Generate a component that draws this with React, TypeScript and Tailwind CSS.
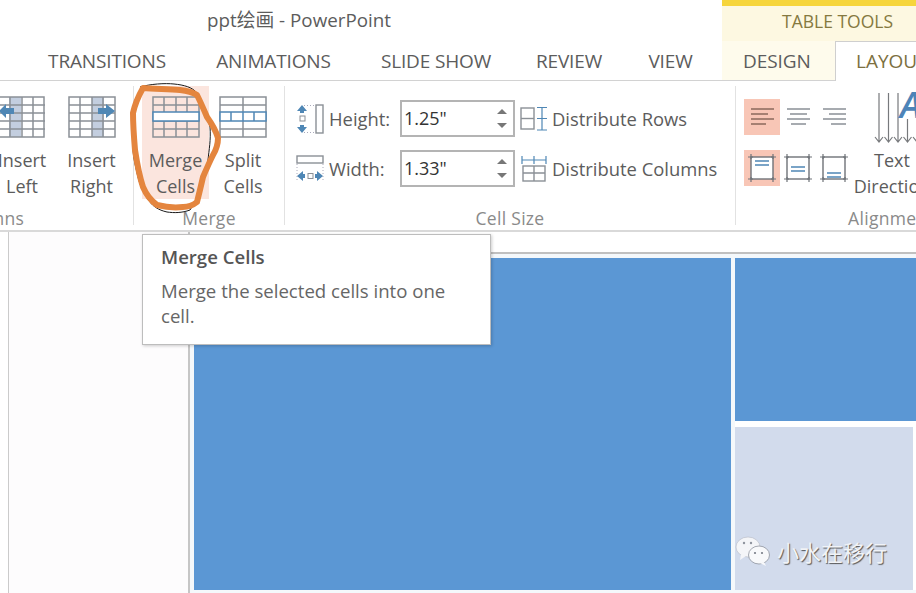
const tabs = [
  { label: 'TRANSITIONS', w: 'w-[166px]' },
  { label: 'ANIMATIONS', w: 'w-[167px]' },
  { label: 'SLIDE SHOW', w: 'w-[158px]' },
  { label: 'REVIEW', w: 'w-[108px]' },
  { label: 'VIEW', w: 'w-[95px]' },
];

const GRAY = '#8b9096';
const BLUE = '#4f87b5';

function InsertIcon({ side }: { side: 'left' | 'right' }) {
  const arrow = side === 'left' ? 'M16 12 L8 12 L8 8 L1 15 L8 22 L8 18 L16 18 Z' : 'M30 12 L38 12 L38 8 L47 15 L38 22 L38 18 L30 18 Z';
  const colX = side === 'left' ? 11 : 24;
  return (
    <svg width="48" height="44" viewBox="0 0 48 44">
      <rect x={colX} y="1" width="12" height="40" fill="#c3cedf" />
      <g stroke={GRAY} strokeWidth="1.5" fill="none">
        <rect x={side === 'left' ? -10 : 1} y="1" width={side === 'left' ? 56 : 46} height="40" />
        <path d="M1 9H47M1 17H47M1 25H47M1 33H47M12 1V41M24 1V41M35 1V41" />
      </g>
      <path d={arrow} fill={BLUE} />
    </svg>
  );
}

function MergeIcon() {
  return (
    <svg width="48" height="44" viewBox="0 0 48 44">
      <g stroke={GRAY} strokeWidth="1.5" fill="none">
        <rect x="1" y="1" width="46" height="40" />
        <path d="M1 9H47M1 25H47M1 33H47M12 1V16M24 1V16M35 1V16M12 25V41M24 25V41M35 25V41" />
      </g>
      <rect x="1" y="16" width="46" height="9" fill="#fff" stroke={BLUE} strokeWidth="1.5" />
    </svg>
  );
}

function SplitIcon() {
  return (
    <svg width="48" height="44" viewBox="0 0 48 44">
      <g stroke={GRAY} strokeWidth="1.5" fill="none">
        <rect x="1" y="1" width="46" height="40" />
        <path d="M1 9H47M1 33H47M24 1V16M24 25V41" />
      </g>
      <rect x="1" y="16" width="46" height="9" fill="#fff" stroke={BLUE} strokeWidth="1.5" />
      <path d="M12 16V25M24 16V25M35 16V25" stroke={BLUE} strokeWidth="1.5" />
    </svg>
  );
}

function HeightIcon() {
  return (
    <svg width="28" height="30" viewBox="0 0 28 30" fill="none">
      <path d="M6 1 L1 7 H4 V9 H8 V7 H11 Z M4 21 V23 H1 L6 29 L11 23 H8 V21 Z" fill={BLUE} />
      <rect x="4" y="12" width="5" height="5" stroke={GRAY} />
      <path d="M8 1.5H19M8 28.5H19" stroke="#aab" strokeDasharray="1 2" />
      <rect x="20" y="1" width="7" height="28" stroke={GRAY} strokeWidth="1.4" />
    </svg>
  );
}

function WidthIcon() {
  return (
    <svg width="28" height="28" viewBox="0 0 28 28" fill="none">
      <rect x="1" y="1" width="26" height="7" stroke={GRAY} strokeWidth="1.4" />
      <path d="M1 9V25M27 9V25" stroke="#aab" strokeDasharray="1 2" />
      <path d="M1 21 L7 16 V19 H9 V23 H7 V26 Z M27 21 L21 16 V19 H19 V23 H21 V26 Z" fill={BLUE} />
      <rect x="12" y="18.5" width="5" height="5" stroke={GRAY} />
    </svg>
  );
}

function DistRowsIcon() {
  return (
    <svg width="28" height="26" viewBox="0 0 28 26" fill="none">
      <rect x="1" y="2" width="13" height="21" stroke={GRAY} strokeWidth="1.4" />
      <path d="M1 12.5H14" stroke={GRAY} strokeWidth="1.4" />
      <path d="M17 1.5H27M17 12.5H27M17 24H27M22 2V24" stroke={BLUE} strokeWidth="1.2" />
    </svg>
  );
}

function DistColsIcon() {
  return (
    <svg width="26" height="28" viewBox="0 0 26 28" fill="none">
      <path d="M1 1V9M13 1V9M25 1V9M1 5H25" stroke={BLUE} strokeWidth="1.2" />
      <rect x="2" y="11" width="22" height="15" stroke={GRAY} strokeWidth="1.4" />
      <path d="M13 11V26M2 18H24" stroke={GRAY} strokeWidth="1.4" />
    </svg>
  );
}

function AlignText({ kind }: { kind: 'left' | 'center' | 'right' }) {
  const paths = {
    left: 'M7 10H30M7 15H24M7 20H30M7 25H22',
    center: 'M7 10H30M10 15H27M7 20H30M11 25H26',
    right: 'M7 10H30M13 15H30M7 20H30M15 25H30',
  };
  return (
    <svg width="36" height="36" viewBox="0 0 36 36" fill="none">
      <path d={paths[kind]} stroke={kind === 'left' ? '#8a6a5c' : GRAY} strokeWidth="1.5" />
    </svg>
  );
}

function AlignCell({ kind }: { kind: 'top' | 'middle' | 'bottom' }) {
  const y = kind === 'top' ? 11 : kind === 'middle' ? 17 : 23;
  return (
    <svg width="36" height="36" viewBox="0 0 36 36" fill="none">
      <rect x="7" y="7" width="22" height="22" stroke="#6f7378" strokeWidth="1.4" fill={kind === 'top' ? '#fff' : 'none'} />
      <path d="M4 7H9M27 7H32M4 29H9M27 29H32M7 4V9M29 4V9M7 27V32M29 27V32" stroke="#6f7378" strokeWidth="1.2" />
      <path d={`M11 ${y}H25M11 ${y + 4}H25`} stroke={BLUE} strokeWidth="1.5" />
    </svg>
  );
}

function TextDirectionIcon() {
  return (
    <svg width="44" height="54" viewBox="0 0 44 54" fill="none" className="overflow-visible">
      <g stroke="#77797c" strokeWidth="1.2">
        <path d="M5 1V50M1 45L5 50L9 45" />
        <path d="M14.5 1V50M10.5 45L14.5 50L18.5 45" />
        <path d="M24 1V50M20 45L24 50L28 45" />
        <path d="M33.5 27V50M29.5 45L33.5 50L37.5 45" />
        <path d="M43 27V50M39 45L43 50L47 45" />
      </g>
      <text x="26" y="26" fill="#4d84b8" fontSize="36" fontStyle="italic" fontWeight="600" fontFamily="Open Sans, sans-serif">A</text>
    </svg>
  );
}

function BigButton({ icon, lines, className }: { icon: React.ReactNode; lines: string[]; className: string }) {
  return (
    <div className={`flex h-[113px] flex-col items-center pt-[10px] ${className}`}>
      <div className="flex h-[44px] items-center">{icon}</div>
      <div className="mt-[7px] text-center text-[18px] leading-[26px]">
        {lines.map((line) => (
          <div key={line}>{line}</div>
        ))}
      </div>
    </div>
  );
}

function SizeRow({ icon, label, value, distIcon, dist, className }: { icon: React.ReactNode; label: string; value: string; distIcon: React.ReactNode; dist: string; className?: string }) {
  return (
    <div className={`flex h-[37px] items-center ${className ?? ''}`}>
      <div className="w-[35px] pl-[2px]">{icon}</div>
      <span className="w-[71px] text-[18.4px]">{label}</span>
      <div className="flex h-[37px] w-[115px] shrink-0 items-center justify-between border-2 border-[#b4b4b4] pl-[2px] pr-[6px] text-[18px] text-[#333]">
        <span>{value}</span>
        <div className="flex flex-col gap-[9px]">
          <div className="h-0 w-0 border-x-[5px] border-b-[5px] border-x-transparent border-b-[#777]" />
          <div className="h-0 w-0 border-x-[5px] border-t-[5px] border-x-transparent border-t-[#777]" />
        </div>
      </div>
      <div className="flex w-[37px] justify-center">{distIcon}</div>
      <span className="text-[18.4px]">{dist}</span>
    </div>
  );
}

function GroupLabel({ children }: { children: string }) {
  return <div className="-mb-[5px] text-center text-[17.5px] leading-[24px] tracking-[0.3px] text-[#8a8a8a]">{children}</div>;
}

export default function App() {
  return (
    <div className="relative flex h-[593px] w-[916px] flex-col overflow-hidden bg-white text-[#5c5c5c] [font-family:'Open_Sans','Noto_Sans_CJK_SC',sans-serif]">
      {/* Title bar and tabs */}
      <header className="flex h-[81px] shrink-0">
        <div className="flex w-[722px] shrink-0 flex-col border-b border-[#d2d2d2]">
          <div className="h-[41px] pl-[207px] pt-[7px] text-[18.8px] leading-[27px]">ppt绘画 - PowerPoint</div>
          <div className="flex pl-[24px]">
            {tabs.map((tab) => (
              <div key={tab.label} className={`${tab.w} pt-[5px] text-center text-[19px] leading-[30px] tracking-[-0.15px]`}>
                {tab.label}
              </div>
            ))}
          </div>
        </div>
        <div className="flex w-[194px] shrink-0 flex-col">
          <div className="h-[41px] border-t-[6px] border-[#f6d53c] bg-[#fdf8e1] pl-[60px] pt-[2px] text-[17.5px] leading-[26px] text-[#85793f]">TABLE TOOLS</div>
          <div className="flex flex-1">
            <div className="w-[113px] shrink-0 border-b border-[#d2d2d2] bg-[#fefbec] pl-[21px] pt-[5px] text-[19px] leading-[30px] tracking-[-0.1px]">DESIGN</div>
            <div className="w-[81px] shrink-0 whitespace-nowrap border-l border-t border-[#cfcfcf] bg-white pl-[20px] pt-[4px] text-[19px] leading-[30px] text-[#7c7040]">LAYOUT</div>
          </div>
        </div>
      </header>

      {/* Ribbon */}
      <section className="flex h-[151px] shrink-0 border-b-2 border-[#d9d9d9] pt-[5px]">
        <div className="-ml-[226px] flex h-[139px] w-[360px] shrink-0 flex-col border-r border-[#e2e2e2]">
          <div className="flex flex-1 justify-end pr-[7px]">
            <BigButton icon={<InsertIcon side="left" />} lines={['Insert', 'Left']} className="w-[70px]" />
            <BigButton icon={<InsertIcon side="right" />} lines={['Insert', 'Right']} className="w-[69px]" />
          </div>
          <GroupLabel>Rows &amp; Columns</GroupLabel>
        </div>
        <div className="flex h-[139px] w-[151px] shrink-0 flex-col border-r border-[#e2e2e2]">
          <div className="flex flex-1 pl-[8px]">
            <BigButton icon={<MergeIcon />} lines={['Merge', 'Cells']} className="w-[67px] bg-[#fbe5de]" />
            <BigButton icon={<SplitIcon />} lines={['Split', 'Cells']} className="w-[68px]" />
          </div>
          <GroupLabel>Merge</GroupLabel>
        </div>
        <div className="flex h-[139px] w-[451px] shrink-0 flex-col border-r border-[#e2e2e2]">
          <div className="flex-1 pl-[9px] pt-[14px]">
            <SizeRow icon={<HeightIcon />} label="Height:" value={'1.25"'} distIcon={<DistRowsIcon />} dist="Distribute Rows" />
            <SizeRow className="mt-[13px]" icon={<WidthIcon />} label="Width:" value={'1.33"'} distIcon={<DistColsIcon />} dist="Distribute Columns" />
          </div>
          <GroupLabel>Cell Size</GroupLabel>
        </div>
        <div className="flex h-[139px] w-[310px] shrink-0 flex-col">
          <div className="flex flex-1">
            <div className="grid h-fit grid-cols-[36px_36px_36px] gap-y-[15px] pl-[8px] pt-[13px]">
              <div className="bg-[#f8c6b6]"><AlignText kind="left" /></div>
              <AlignText kind="center" />
              <AlignText kind="right" />
              <div className="bg-[#f8c6b6]"><AlignCell kind="top" /></div>
              <AlignCell kind="middle" />
              <AlignCell kind="bottom" />
            </div>
            <div className="w-[92px] shrink-0 pl-[7px]">
              <div className="flex h-[62px] items-start pl-[15px] pt-[6px]"><TextDirectionIcon /></div>
              <div className="-ml-[23px] -mt-[1px] w-[112px] text-center text-[18px] leading-[26px]">
                <div>Text</div>
                <div>Direction</div>
              </div>
            </div>
          </div>
          <GroupLabel>Alignment</GroupLabel>
        </div>
      </section>

      {/* Thumbnail pane and slide */}
      <main className="flex min-h-0 flex-1">
        <div className="w-[9px] shrink-0 border-r border-[#cbcbcb]" />
        <div className="w-[181px] shrink-0 border-r-2 border-[#c6c6c6] bg-[#fdfcfd]" />
        <div className="flex min-w-0 flex-1 flex-col">
          <div className="h-[22px] shrink-0 border-b-2 border-[#c0c0c0]" />
          <div className="flex flex-1 gap-[4px] bg-[#f4f8fb] pb-[3px] pl-[4px] pt-[4px]">
            <div className="w-[537px] bg-[#5b97d4]" />
            <div className="flex flex-1 flex-col">
              <div className="h-[163px] bg-[#5b97d4]" />
              <div className="flex-1 border-r-[3px] border-t-[6px] border-white bg-[#d2dbec]" />
            </div>
          </div>
        </div>
      </main>

      {/* Tooltip */}
      <div className="absolute left-[142px] top-[234px] h-[111px] w-[349px] border border-[#bdbdbd] bg-white px-[18px] pt-[8px] shadow-[1px_1px_3px_rgba(0,0,0,0.2)]">
        <div className="text-[18.6px] font-semibold leading-[28px] text-[#555]">Merge Cells</div>
        <div className="mt-[7px] text-[18.6px] leading-[25px] text-[#666]">Merge the selected cells into one cell.</div>
      </div>

      {/* Hand-drawn annotation round the Merge Cells button */}
      <svg className="pointer-events-none absolute left-0 top-0" width="916" height="593" fill="none">
        <path d="M140 87 C150 84 165 83 174 84 C184 85 192 87 197 93 C203 103 207 115 210 127 C211 140 209 150 208 160 C204 180 198 198 190 210 C182 213 174 213 167 212 C158 210 153 206 150 202 C142 192 139 182 137 173 C134 160 132 150 133 137" stroke="#1a1a1a" strokeWidth="1" />
        <path d="M143 88 C155 89 168 89 180 90 C190 91 194 93 197 95 C201 103 204 110 207 117 C212 124 216 131 218 138 C218 145 216 150 213 155 C209 163 206 170 203 177 C201 186 199 194 197 202 C192 206 188 207 183 207 C174 208 165 207 157 205 C150 200 146 194 143 187 C139 175 137 163 135 150 C134 138 133 125 133 113 C135 104 139 95 143 88 Z" stroke="#e4853e" strokeWidth="6" strokeLinejoin="round" />
      </svg>

      {/* Watermark */}
      <div className="absolute left-[735px] top-[535px] flex items-center gap-[6px]">
        <svg width="36" height="32" viewBox="0 0 36 32">
          <ellipse cx="13" cy="12" rx="12" ry="10" fill="#f4f5f8" stroke="#b5b9c2" strokeWidth="0.6" />
          <path d="M6 19 L5 25 L11 21 Z" fill="#f4f5f8" />
          <ellipse cx="24" cy="20" rx="10.5" ry="9" fill="#f8f9fb" stroke="#8f949e" strokeWidth="0.8" />
          <path d="M29 27 L31 31 L25 28 Z" fill="#f8f9fb" />
          <circle cx="9" cy="8" r="1.2" fill="#8f949e" />
          <circle cx="16" cy="8" r="1.2" fill="#8f949e" />
          <circle cx="20" cy="18" r="1.1" fill="#777c86" />
          <circle cx="27" cy="18" r="1.1" fill="#777c86" />
        </svg>
        <span className="text-[22px] leading-[30px] text-[#f1f3f7] [font-family:'Noto_Sans_CJK_SC',sans-serif] [text-shadow:1px_1px_1px_#555]">小水在移行</span>
      </div>
    </div>
  );
}
